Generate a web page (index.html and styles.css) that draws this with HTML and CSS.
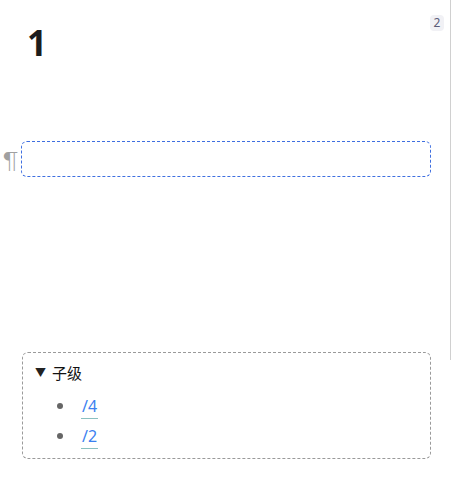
FILE: index.html
```html
<!DOCTYPE html>
<html lang="zh">
<head>
<meta charset="utf-8">
<link rel="stylesheet" href="styles.css">
</head>
<body>
<div class="scroll-line"></div>
<span class="badge">2</span>
<main class="page">
  <h1 class="title">1</h1>
  <div class="block-row">
    <span class="pilcrow">¶</span>
    <div class="editor"></div>
  </div>
  <section class="children">
    <div class="summary"><span class="caret">▼</span><span class="summary-text">子级</span></div>
    <ul class="child-list">
      <li><a class="child-link" href="#">/4</a></li>
      <li><a class="child-link" href="#">/2</a></li>
    </ul>
  </section>
</main>
</body>
</html>
```
FILE: styles.css
```css
html, body {
  margin: 0;
  padding: 0;
  background: #fff;
}
body {
  width: 451px;
  height: 490px;
  overflow: hidden;
  position: relative;
  font-family: "Noto Sans", "Noto Sans CJK SC", sans-serif;
  color: #1f1f1f;
}
.scroll-line {
  position: absolute;
  left: 450px;
  top: 0;
  width: 1px;
  height: 360px;
  background: #d0d0d0;
}
.badge {
  position: absolute;
  left: 430px;
  top: 15px;
  width: 14px;
  height: 16px;
  border-radius: 4px;
  background: #f1f1f5;
  color: #5b5b78;
  font-size: 12px;
  line-height: 16px;
  text-align: center;
}
.page {
  display: flex;
  flex-direction: column;
}
.title {
  margin: 21px 0 0 27px;
  font-family: "Open Sans", sans-serif;
  font-size: 35px;
  line-height: 44px;
  font-weight: 700;
  color: #1c1c1c;
}
.block-row {
  display: flex;
  align-items: center;
  margin-top: 76px;
  padding-left: 3px;
}
.pilcrow {
  width: 18px;
  font-size: 23px;
  font-weight: 300;
  color: #a0a0a0;
  font-family: "Lato", sans-serif;
  line-height: 24px;
  margin-top: 1px;
}
.editor {
  width: 408px;
  height: 34px;
  border: 1px dashed #3f6fe0;
  border-radius: 6px;
}
.children {
  margin: 175px 0 0 22px;
  width: 407px;
  height: 105px;
  border: 1px dashed #9a9a9a;
  border-radius: 6px;
}
.summary {
  display: flex;
  align-items: center;
  margin: 10px 0 0 12px;
  font-size: 15px;
  line-height: 20px;
  color: #111;
}
.caret {
  font-size: 11px;
  width: 17px;
  color: #222;
}
.summary-text {
  font-family: "Noto Sans CJK SC", sans-serif;
}
.child-list {
  margin: 8px 0 0 0;
  padding: 0 0 0 58px;
  list-style: none;
}
.child-list li {
  position: relative;
  height: 30px;
  line-height: 30px;
  font-size: 16px;
}
.child-list li::before {
  content: "";
  position: absolute;
  left: -24px;
  top: 12px;
  width: 6px;
  height: 6px;
  border-radius: 50%;
  background: #666;
}
.child-link {
  color: #3b7ff0;
  text-decoration: none;
  border-bottom: 1px solid #8ac0c0;
  padding: 0 1px 1px 1px;
  font-family: "Noto Sans", sans-serif;
}
```
